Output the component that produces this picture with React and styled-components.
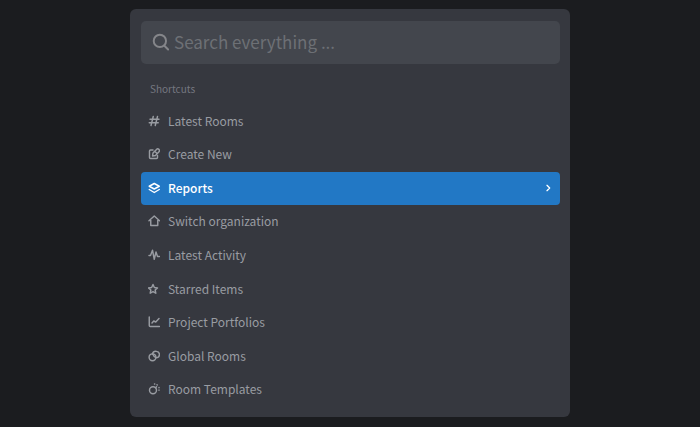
import styled, { createGlobalStyle } from 'styled-components';

const COLORS = {
  page: '#1b1c1f',
  panel: '#36383f',
  field: '#43464d',
  active: '#2278c5',
  text: '#999ca2',
  muted: '#757780',
  placeholder: '#6d7075',
  searchIcon: '#85868a',
};

const GlobalStyle = createGlobalStyle`
  * {
    box-sizing: border-box;
  }
  body {
    margin: 0;
    background: ${COLORS.page};
    font-family: 'Noto Sans CJK SC', 'Noto Sans', sans-serif;
  }
`;

const Page = styled.main`
  display: flex;
  justify-content: center;
  padding: 9px 16px 10px;
`;

const Panel = styled.section`
  width: 100%;
  max-width: 440px;
  padding: 12px 10px 11px 11px;
  border-radius: 6px;
  background: ${COLORS.panel};
`;

const SearchBar = styled.label`
  display: flex;
  align-items: center;
  gap: 4px;
  height: 43px;
  padding: 0 11px 1px;
  border-radius: 5px;
  background: ${COLORS.field};
  color: ${COLORS.searchIcon};
`;

const SearchInput = styled.input`
  flex: 1;
  min-width: 0;
  padding: 0;
  border: 0;
  outline: 0;
  background: transparent;
  color: white;
  font-family: inherit;
  font-size: 17px;
  line-height: 24px;
  &::placeholder {
    color: ${COLORS.placeholder};
    opacity: 1;
  }
`;

const Heading = styled.h2`
  margin: 17px 0 9px;
  padding-left: 9px;
  color: ${COLORS.muted};
  font-size: 10px;
  font-weight: 400;
  line-height: 15px;
`;

const List = styled.nav`
  display: grid;
  grid-auto-rows: 1fr;
  row-gap: 1px;
  min-height: 301px;
`;

const Item = styled.a`
  display: flex;
  align-items: center;
  gap: 8px;
  padding: 0 8px 1px 7px;
  border-radius: 4px;
  background: ${({ $active }) => ($active ? COLORS.active : 'transparent')};
  color: ${({ $active }) => ($active ? 'white' : COLORS.text)};
  font-size: 12px;
  font-weight: ${({ $active }) => ($active ? 500 : 400)};
  line-height: 16px;
  text-decoration: none;
`;

const Label = styled.span`
  flex: 1;
`;

const Svg = styled.svg`
  flex: none;
  width: ${({ $size }) => $size}px;
  height: ${({ $size }) => $size}px;
  fill: none;
  stroke: currentColor;
  stroke-width: ${({ $stroke }) => $stroke};
  stroke-linecap: round;
  stroke-linejoin: round;
`;

const Icon = ({ size = 12, stroke = 2.9, children }) => (
  <Svg $size={size} $stroke={stroke} viewBox="0 0 24 24" aria-hidden="true">
    {children}
  </Svg>
);

const shortcuts = [
  {
    label: 'Latest Rooms',
    icon: <path d="M10.500 3 6 21M19 3l-4.500 18M4 8.500h18M2.500 15.500h18" />,
  },
  {
    label: 'Create New',
    icon: (
      <>
        <path d="M10 4H5a2 2 0 0 0-2 2v13a2 2 0 0 0 2 2h12a2 2 0 0 0 2-2v-4" />
        <path d="M9 16l1-6 7-7a3 3 0 0 1 5 4.500L15 15zM14 7l3 3" />
      </>
    ),
  },
  {
    label: 'Reports',
    active: true,
    icon: <path d="M12.500 3 2.500 8.500l10 5.500 10-5.500zM2.500 15l10 6 10-6" />,
  },
  {
    label: 'Switch organization',
    icon: <path d="M2 11.500 12.500 2 23 11.500M5.500 10v11h14V10" />,
  },
  {
    label: 'Latest Activity',
    icon: <path d="M2 13h3L9 2.500l3.500 18L16 6l3 9h4" />,
  },
  {
    label: 'Starred Items',
    icon: (
      <path d="m10 3 2.700 6 6.300.7-4.700 4.300 1.300 6.500-5.600-3.300-5.600 3.300 1.300-6.500L1 9.700 7.300 9z" />
    ),
  },
  {
    label: 'Project Portfolios',
    icon: <path d="M2.500 2v17a2 2 0 0 0 2 2H23M8 14l3.500-4 4 2L22 5" />,
  },
  {
    label: 'Global Rooms',
    icon: (
      <>
        <circle cx="9" cy="14.500" r="6.800" />
        <path d="M9 7.700a7 6.300 0 1 1 7 7.600" />
        <path d="M9 7.700c2 5 4 6.300 7 7.600" />
      </>
    ),
  },
  {
    label: 'Room Templates',
    icon: (
      <>
        <circle cx="10" cy="14.500" r="7" />
        <path d="M13 2h.5M18 3.500l.5.5M22 9v.5M17 7.500l-2 2M22 14v.5" />
      </>
    ),
  },
];

const App = () => (
  <>
    <GlobalStyle />
    <Page>
      <Panel>
        <SearchBar htmlFor="search">
          <Icon size={18} stroke={2.6}>
            <circle cx="10.500" cy="10.500" r="8.200" />
            <path d="m16.500 17 5 5" />
          </Icon>
          <SearchInput
            id="search"
            type="text"
            aria-label="Search everything"
            placeholder="Search everything ..."
          />
        </SearchBar>
        <Heading>Shortcuts</Heading>
        <List aria-label="Shortcuts">
          {shortcuts.map(({ label, icon, active }) => (
            <Item
              key={label}
              href="#"
              $active={active}
              aria-current={active ? 'true' : undefined}
            >
              <Icon>{icon}</Icon>
              <Label>{label}</Label>
              {active && (
                <Icon size={8} stroke={4}>
                  <path d="m9 4 8 8-8 8" />
                </Icon>
              )}
            </Item>
          ))}
        </List>
      </Panel>
    </Page>
  </>
);

export default App;
